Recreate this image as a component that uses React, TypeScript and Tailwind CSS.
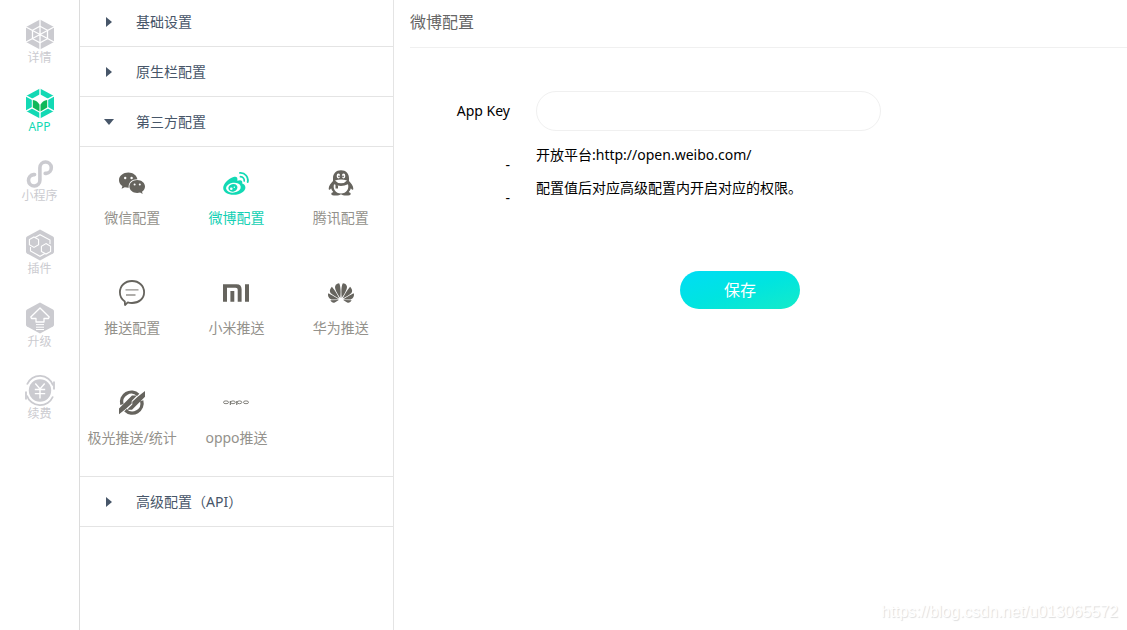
import React from "react";
import { SiHuawei } from "react-icons/si";

type IconProps = { className?: string };

const hex = "M15 0.5 L29 8 V23 L15 30.5 L1 23 V8 Z";

function DetailIcon() {
  return (
    <svg width="30" height="31" viewBox="0 0 30 31" aria-hidden="true">
      <path d={hex} fill="currentColor" />
      <g stroke="#fff" strokeWidth="1.3" fill="none">
        <path d="M15 0V31M0.5 7.7L29.5 23.3M29.5 7.7L0.5 23.3" />
        <path d="M15 7.2L22.5 11.3V19.7L15 23.8L7.5 19.7V11.3Z" />
      </g>
    </svg>
  );
}

function AppIcon() {
  return (
    <svg width="30" height="31" viewBox="0 0 30 31" aria-hidden="true">
      <path d={hex} fill="#12d9b4" />
      <path d="M15 0V31M0.5 7.7L29.5 23.3M29.5 7.7L0.5 23.3" stroke="#fff" strokeWidth="1.4" />
      <path d="M15 6.2L23.2 10.8V20.4L15 25L6.8 20.4V10.8Z" fill="#fff" />
      <path d="M14.5 16.8C13.2 14 11 12.4 7.8 12V19.6L14.5 23.4Z" fill="#0fb858" />
      <path d="M15.5 16.8C16.8 14 19 12.4 22.2 12V19.6L15.5 23.4Z" fill="#0fb858" />
    </svg>
  );
}

function MiniIcon() {
  return (
    <svg width="30" height="28" viewBox="0 0 30 28" aria-hidden="true">
      <path
        d="M9.6 14.6H8.6A5.700 5.700 0 1 0 14.900 20.300V7.700A5.700 5.700 0 1 1 21.200 13.400H20.200"
        fill="none"
        stroke="currentColor"
        strokeWidth="3.6"
        strokeLinecap="round"
      />
    </svg>
  );
}

function PluginIcon() {
  return (
    <svg width="30" height="32" viewBox="0 0 30 32" aria-hidden="true">
      <path d="M15 0.5L28 7.6Q29 8.2 29 9.2V22.8Q29 23.8 28 24.4L15 31.5L2 24.4Q1 23.8 1 22.8V9.2Q1 8.2 2 7.6Z" fill="currentColor" />
      <g fill="none" stroke="#fff" strokeWidth="1.1">
        <path d="M10 8.5L15 5.7L25 11V15M20 24.5L15 27.3L5.5 22V18" />
        <path d="M9 8L13.6 10.6V15.8L9 18.4L4.4 15.8V10.6Z" />
        <path d="M21 14.6L25.6 17.2V22.4L21 25L16.4 22.4V17.2Z" />
      </g>
    </svg>
  );
}

function UpgradeIcon() {
  return (
    <svg width="30" height="32" viewBox="0 0 30 32" aria-hidden="true">
      <path d="M15 0.5L28 7.6Q29 8.2 29 9.2V22.8Q29 23.8 28 24.4L15 31.5L2 24.4Q1 23.8 1 22.8V9.2Q1 8.2 2 7.6Z" fill="currentColor" />
      <g fill="none" stroke="#fff" strokeWidth="1.3">
        <path d="M11 20V16.5H6.5L5.8 15L15 6L24.2 15L23.5 16.5H19V20Z" strokeLinejoin="round" />
        <path d="M11 22.6H19M11 25.2H19M11 27.5H19" strokeWidth="1" />
      </g>
    </svg>
  );
}

function RenewIcon() {
  return (
    <svg width="32" height="31" viewBox="0 0 32 31" aria-hidden="true">
      <circle cx="16" cy="15.5" r="11.2" fill="currentColor" />
      <g fill="none" stroke="currentColor" strokeWidth="1.8">
        <path d="M3 9.5A14 14 0 0 1 29.2 10.5" />
        <path d="M29 21.5A14 14 0 0 1 2.8 20.5" />
        <path d="M30 6.5V14.5M2 16.5V24.5" />
      </g>
      <path d="M11.3 8.5L16 14L20.7 8.5M16 14V23.5M10.8 14.5H21.2M10.8 18.6H21.2" fill="none" stroke="#fff" strokeWidth="1.4" />
    </svg>
  );
}

function WechatIcon({ className }: IconProps) {
  return (
    <svg className={className} viewBox="0 0 26 26" aria-hidden="true" fill="currentColor">
      <path d="M9.4 2.6C4.3 2.6 0 5.9 0 10.2c0 2.4 1.3 4.5 3.4 5.9l-.8 2.7 3.2-1.6c1.1.3 2.3.5 3.6.5h.3C9 12.6 13 9.2 18.4 9.2C17.7 5.4 13.9 2.6 9.4 2.6Z" />
      <path d="M18.2 10C13.9 10 10.4 12.9 10.4 16.5S13.9 23 18.2 23c1 0 2-.2 2.9-.4l2.6 1.4-.7-2.3C24.8 20.5 26 18.6 26 16.5 26 12.9 22.5 10 18.2 10Z" />
      <g fill="#fff">
        <circle cx="6.2" cy="8" r="1.2" />
        <circle cx="12.6" cy="8" r="1.2" />
        <circle cx="15.6" cy="14.6" r="1" />
        <circle cx="20.8" cy="14.6" r="1" />
      </g>
    </svg>
  );
}

function WeiboIcon({ className }: IconProps) {
  return (
    <svg className={className} viewBox="0 0 26 26" aria-hidden="true" fill="currentColor">
      <path d="M10.5 7C5.500 8.600 .2 13.800 .2 18C.2 22 5 24.800 10.500 24.800C17.500 24.800 22.400 21.200 22.400 17.400C22.400 15.200 20.800 14 19.200 13.500C19.900 10.800 18.300 9.400 14.300 10.800C15 7.400 13.500 6 10.500 7Z" />
      <ellipse cx="10.400" cy="17.700" rx="7.400" ry="4.900" fill="#fff" transform="rotate(-7 10.400 17.700)" />
      <ellipse cx="9.900" cy="17.800" rx="4.600" ry="3.800" transform="rotate(-15 9.900 17.800)" />
      <circle cx="8.300" cy="18.800" r="1.300" fill="#fff" />
      <circle cx="11.300" cy="17.200" r=".7" fill="#fff" />
      <g fill="none" stroke="currentColor" strokeWidth="1.900" strokeLinecap="round">
        <path d="M17 2.900A7.400 7.400 0 0 1 24.700 12" />
        <path d="M17.500 6.700A3.700 3.700 0 0 1 21.200 11" strokeWidth="1.700" />
      </g>
    </svg>
  );
}

function QqIcon({ className }: IconProps) {
  return (
    <svg className={className} viewBox="0 0 26 26" aria-hidden="true">
      <path
        d="M13 .3C8 .3 5 3.7 5 8.2V11C3 13 .7 16 .7 18.5c0 1.8.9 1.7 2.4-.3.4 1.5 1.1 2.7 2.2 3.8-1.2.5-2 1.1-2 1.9C3.3 25 5 25.6 7.800 25.6c2.3 0 4.2-.5 5.2-1.4 1 .9 2.9 1.4 5.2 1.4 2.8 0 4.5-.6 4.5-1.700 0-.8-.8-1.4-2-1.9 1.1-1.1 1.8-2.3 2.2-3.8 1.5 2 2.4 2.1 2.4.3C25.3 16 23 13 21 11V8.2C21 3.7 18 .3 13 .3Z"
        fill="currentColor"
      />
      <g fill="#fff">
        <ellipse cx="10.4" cy="6" rx="1.7" ry="2.4" />
        <ellipse cx="15.6" cy="6" rx="1.7" ry="2.4" />
        <path d="M7 10.5Q13 8.5 19 10.5Q17 13.2 13 13.2T7 10.5Z" />
        <path d="M6 14.3Q13 17.5 20 14.3C21.3 19 18.5 23.5 13 23.5S4.7 19 6 14.3Z" />
      </g>
      <circle cx="11" cy="6.3" r=".9" fill="currentColor" />
      <circle cx="15" cy="6.3" r=".9" fill="currentColor" />
      <path d="M7.5 14.5L10 15.5V18.5H7.5Z" fill="currentColor" />
    </svg>
  );
}

function PushIcon({ className }: IconProps) {
  return (
    <svg className={className} viewBox="0 0 26 26" aria-hidden="true" fill="none" stroke="currentColor">
      <path d="M5.8 21.5C2.7 19.5 .9 16.2 .9 12.3C.9 5.9 6 1 13 1S25.1 5.9 25.1 12.3S20 23 13 23C11.3 23 10 22.8 8.800 22.4L6 25Z" strokeWidth="1.8" strokeLinejoin="round" />
      <path d="M6.5 9.8H19.5M7 15H16.5" strokeWidth="1.3" strokeOpacity=".7" />
    </svg>
  );
}

function MiIcon({ className }: IconProps) {
  return (
    <svg className={className} viewBox="0 0 26 26" aria-hidden="true" fill="currentColor">
      <path d="M0 4.3H13.5C17 4.3 18.6 6.2 18.6 9.3V21.700H14.7V10C14.7 8.4 14 7.7 12.5 7.7H4V21.7H0Z" />
      <path d="M7.4 11H11.3V21.7H7.4ZM22 4.3H26V21.7H22Z" />
    </svg>
  );
}

function AuroraIcon({ className }: IconProps) {
  return (
    <svg className={className} viewBox="0 0 26 26" aria-hidden="true" fill="none" stroke="currentColor">
      <path d="M2.900 14.500A9.800 9.800 0 0 1 19.200 4.900" strokeWidth="3.400" />
      <path d="M22.700 10.700A9.800 9.800 0 0 1 6.400 20.300" strokeWidth="3.400" />
      <g fill="currentColor" stroke="none">
        <path d="M26 1V6.700L13 19.700H8L13.300 14.400V11.700L19 6.500Z" />
        <path d="M0 24.300V18.600L13 5.600H18L12.700 10.900V13.600L7 18.800Z" />
      </g>
    </svg>
  );
}

function OppoIcon({ className }: IconProps) {
  return (
    <svg className={className} viewBox="0 0 26 26" aria-hidden="true" fill="none" stroke="currentColor" strokeWidth=".7">
      <g strokeWidth=".8">
        <ellipse cx="3" cy="12.300" rx="2.600" ry="1.400" />
        <ellipse cx="10" cy="12.300" rx="2.300" ry="1.400" />
        <ellipse cx="16.500" cy="12.300" rx="2.300" ry="1.400" />
        <ellipse cx="23" cy="12.300" rx="2.600" ry="1.400" />
      </g>
      <path d="M7.300 11V15M13.800 11V15" strokeWidth="1" />
    </svg>
  );
}

const primary = [
  { label: "详情", icon: <DetailIcon />, active: false },
  { label: "APP", icon: <AppIcon />, active: true },
];

const secondary = [
  { label: "小程序", icon: <MiniIcon />, active: false },
  { label: "插件", icon: <PluginIcon />, active: false },
  { label: "升级", icon: <UpgradeIcon />, active: false },
  { label: "续费", icon: <RenewIcon />, active: false },
];

const services = [
  { label: "微信配置", Icon: WechatIcon },
  { label: "微博配置", Icon: WeiboIcon, active: true },
  { label: "腾讯配置", Icon: QqIcon },
  { label: "推送配置", Icon: PushIcon },
  { label: "小米推送", Icon: MiIcon },
  { label: "华为推送", Icon: SiHuawei },
  { label: "极光推送/统计", Icon: AuroraIcon },
  { label: "oppo推送", Icon: OppoIcon },
];

function NavItem({ label, icon, active }: { label: string; icon: React.ReactNode; active: boolean }) {
  return (
    <a
      href="#"
      className={`flex flex-col items-center text-xs leading-4 ${active ? "text-[#12d9b4]" : "text-[#cbcbd0]"}`}
    >
      {icon}
      <span>{label}</span>
    </a>
  );
}

function Section({ title, open = false }: { title: string; open?: boolean }) {
  return (
    <button
      type="button"
      aria-expanded={open}
      className="flex h-[50px] w-full items-center border-b border-[#e4e4e4] pl-6 text-left text-sm text-[#475669]"
    >
      <svg width="10" height="10" viewBox="0 0 10 10" className="mr-[22px]" fill="#475669" aria-hidden="true">
        {open ? <path d="M0 2H10L5 8Z" /> : <path d="M2 0L8 5L2 10Z" />}
      </svg>
      {title}
    </button>
  );
}

export default function App() {
  return (
    <div className="flex min-h-screen bg-white font-['Noto_Sans','Noto_Sans_CJK_SC',sans-serif]">
      <nav className="flex w-20 shrink-0 flex-col gap-[25px] border-r border-[#dcdcdc] pt-[19px]">
        <div className="flex flex-col gap-[22px]">
          {primary.map((item) => (
            <NavItem key={item.label} {...item} />
          ))}
        </div>
        <div className="flex flex-col gap-[25px]">
          {secondary.map((item) => (
            <NavItem key={item.label} {...item} />
          ))}
        </div>
      </nav>

      <aside className="w-[314px] shrink-0 overflow-hidden border-r border-[#e4e4e4]">
        <div className="-mt-[3px]">
          <Section title="基础设置" />
          <Section title="原生栏配置" />
          <Section title="第三方配置" open />
          <div className="-mt-px grid grid-cols-3 border-b border-[#e4e4e4]">
            {services.map(({ label, Icon, active }) => (
              <a
                key={label}
                href="#"
                className={`flex h-[110px] flex-col items-center gap-3 pt-6 text-sm leading-5 whitespace-nowrap ${
                  active ? "text-[#12d0b4]" : "text-[#94928c]"
                }`}
              >
                <Icon className={`size-[26px] ${active ? "text-[#12d9b4]" : "text-[#66645e]"}`} />
                <span>{label}</span>
              </a>
            ))}
          </div>
          <Section title="高级配置（API）" />
        </div>
      </aside>

      <main className="flex min-w-0 flex-1 flex-col pl-4">
        <h1 className="border-b border-[#f0f0f0] pt-2.5 pb-3 text-base leading-[25px] text-[#666]">微博配置</h1>
        <form className="mt-[43px] w-full max-w-[660px] text-sm text-black" onSubmit={(e) => e.preventDefault()}>
          <div className="flex items-center gap-[26px]">
            <label htmlFor="app-key" className="w-[100px] shrink-0 text-right">
              App Key
            </label>
            <input
              id="app-key"
              type="text"
              className="h-10 w-[345px] min-w-0 rounded-full border border-[#f0f0f0] px-4 outline-none"
            />
          </div>
          <ul className="mt-2">
            <li className="flex h-[33px] gap-[26px] leading-8">
              <span className="w-[100px] shrink-0 pt-2.5 text-right">-</span>
              <span>开放平台:http://open.weibo.com/</span>
            </li>
            <li className="flex h-[33px] gap-[26px] leading-8">
              <span className="w-[100px] shrink-0 pt-2.5 text-right">-</span>
              <span>配置值后对应高级配置内开启对应的权限。</span>
            </li>
          </ul>
          <div className="mt-[66px] flex justify-center">
            <button
              type="submit"
              className="h-[38px] w-[120px] rounded-full bg-linear-to-br from-[#00dcf5] via-[#00e4e0] to-[#14ebc8] text-base text-white"
            >
              保存
            </button>
          </div>
        </form>
        <p className="mt-auto pr-[9px] pb-1.5 text-right font-['Liberation_Sans',sans-serif] text-base text-white [text-shadow:1px_1px_1px_#ddd]">
          https://blog.csdn.net/u013065572
        </p>
      </main>
    </div>
  );
}
